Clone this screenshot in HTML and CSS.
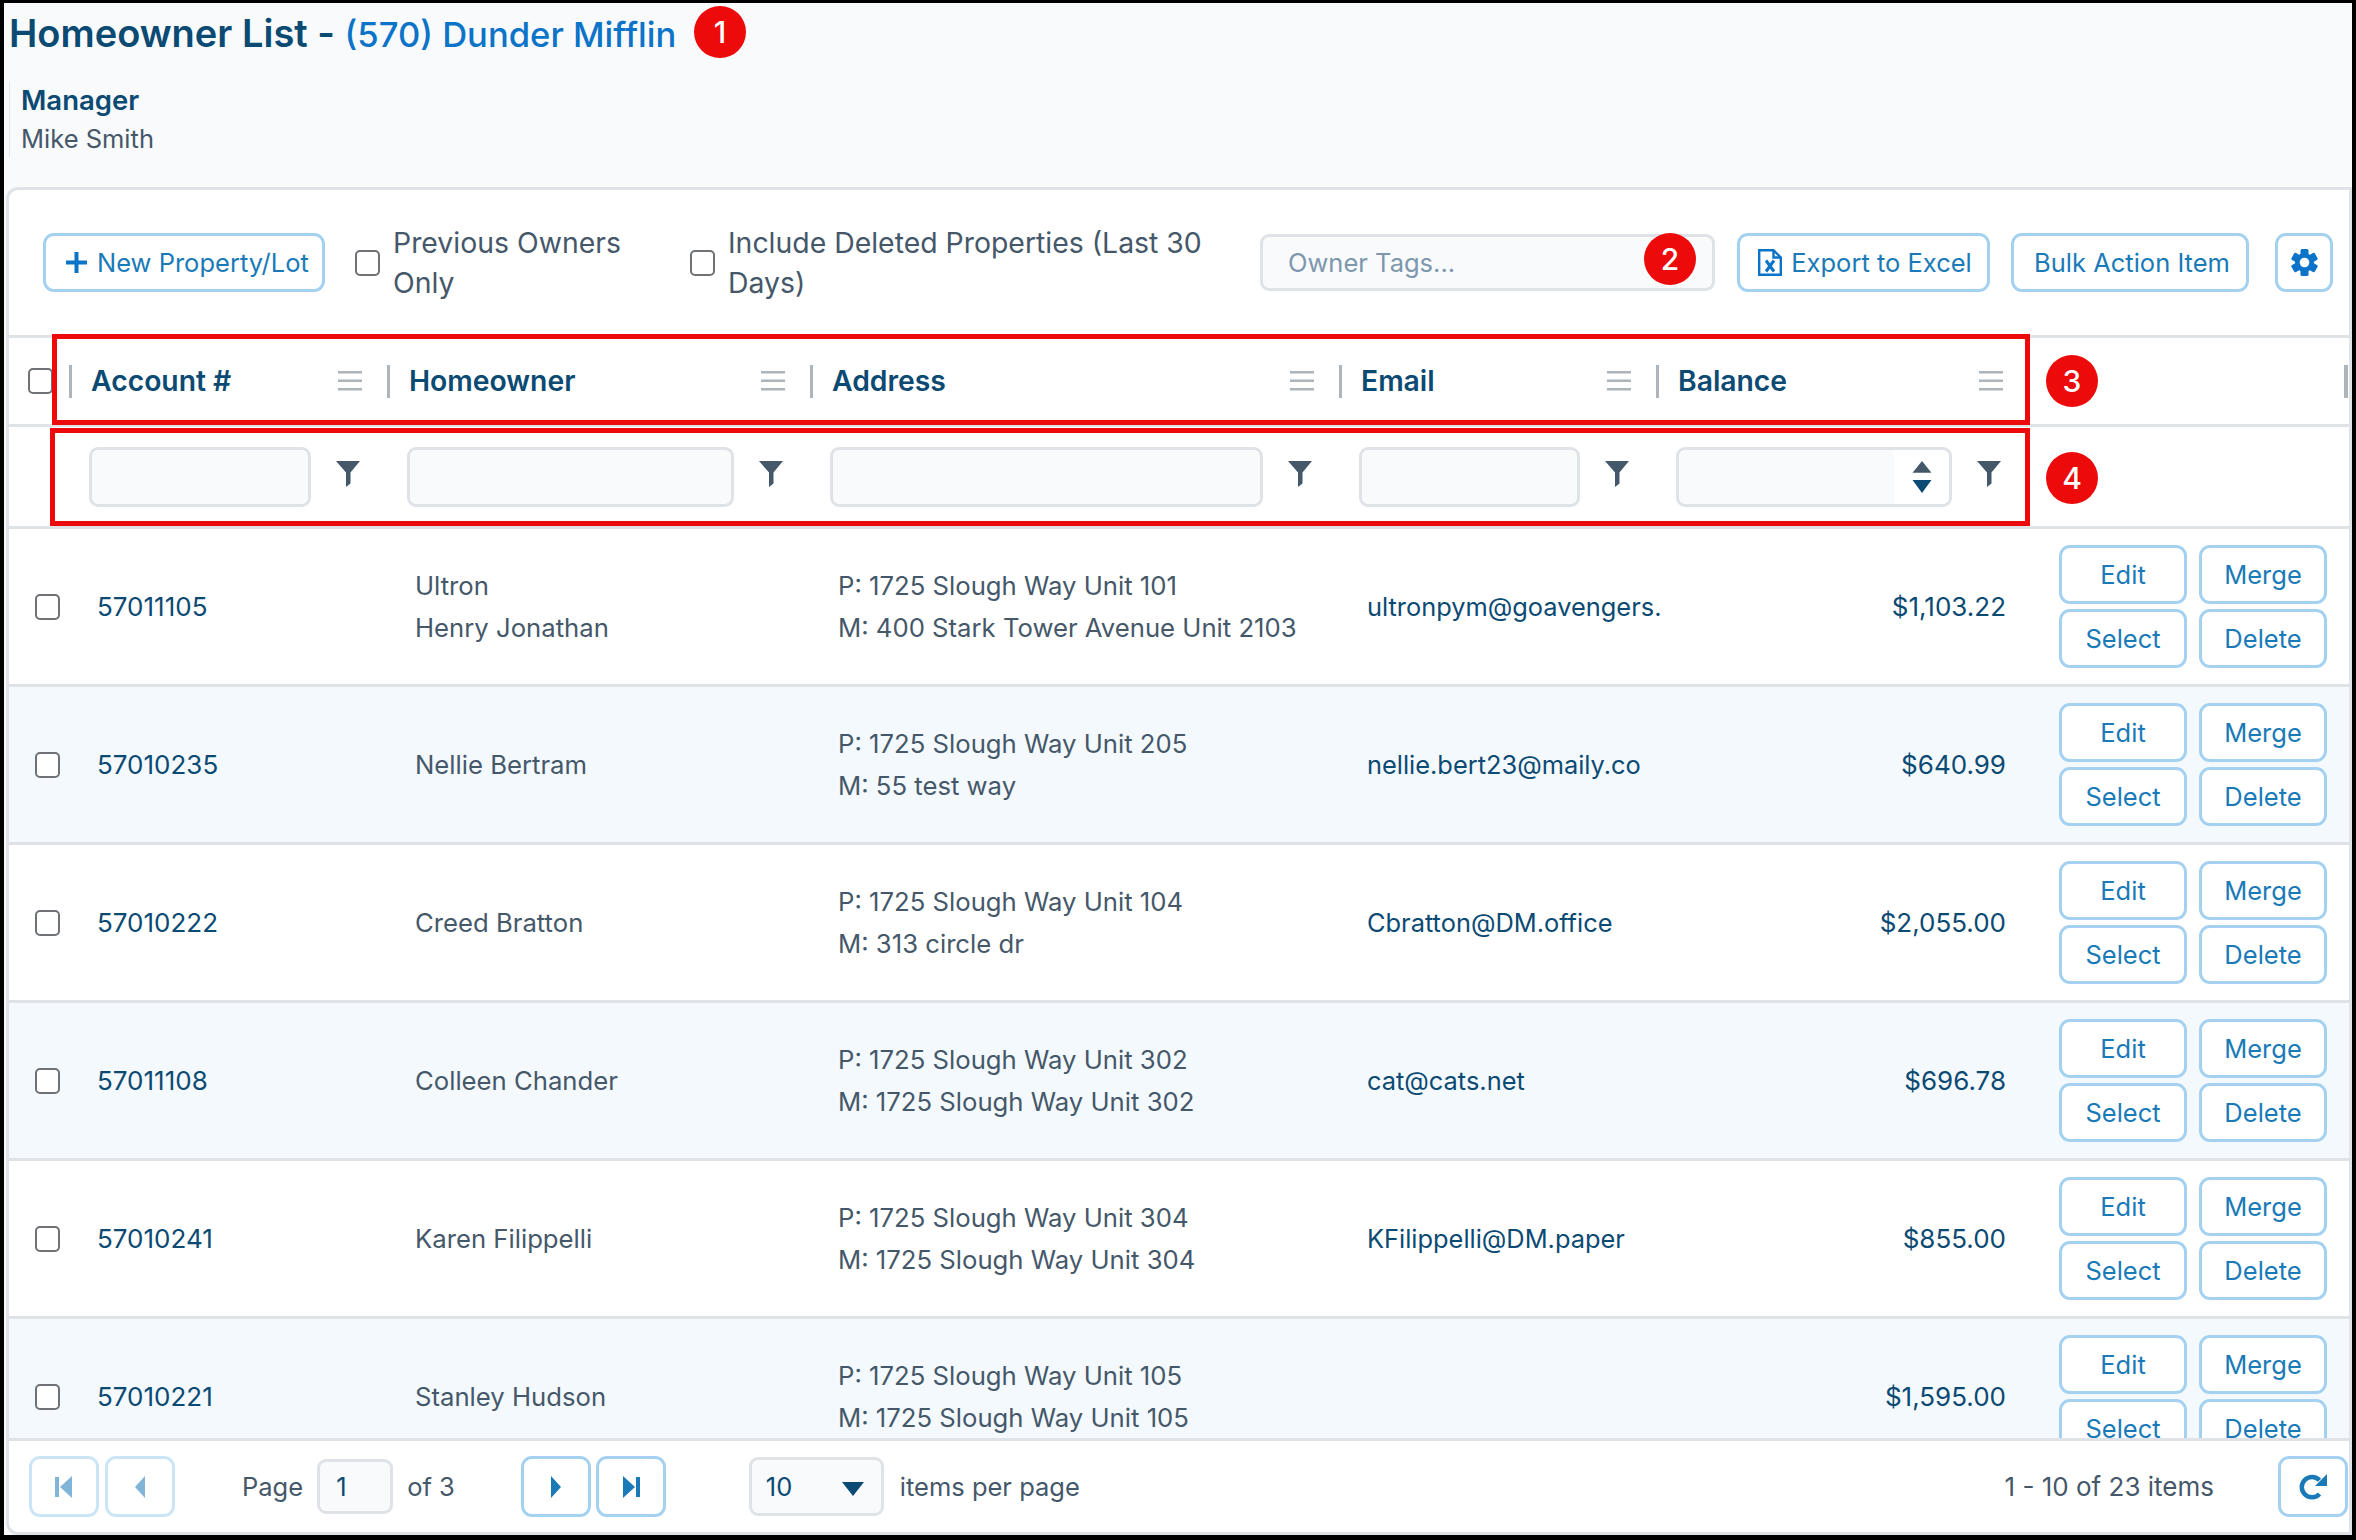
FILE: index.html
```html
<!DOCTYPE html>
<html lang="en">
<head>
  <meta charset="UTF-8">
  <title>Homeowner List</title>
  <link rel="stylesheet" href="styles.css">
</head>
<body>
  <svg class="defs" width="0" height="0">
    <symbol id="funnel" viewBox="0 0 24 26"><path d="M0 0H24L14.5 11.5V22.5L10 26V11.5Z"/></symbol>
    <symbol id="menu" viewBox="0 0 24 20"><path d="M0 0H24V2.5H0ZM0 8.5H24V11H0ZM0 17H24V19.5H0Z"/></symbol>
  </svg>

  <div class="frame">
    <h1 class="title">Homeowner List - <span class="title-link">(570) Dunder Mifflin</span></h1>
    <div class="manager">
      <div class="manager-label">Manager</div>
      <div class="manager-name">Mike Smith</div>
    </div>

    <div class="card">
      <!-- Toolbar -->
      <div class="toolbar">
        <button class="btn btn-new">
          <svg class="icon-plus" viewBox="0 0 21 21"><path d="M8.5 0H12.5V8.5H21V12.5H12.5V21H8.5V12.5H0V8.5H8.5Z"/></svg>
          New Property/Lot
        </button>
        <label class="check-label check-owners"><span class="checkbox"></span><span>Previous Owners Only</span></label>
        <label class="check-label check-deleted"><span class="checkbox"></span><span>Include Deleted Properties (Last 30 Days)</span></label>
        <div class="tags">Owner Tags...</div>
        <button class="btn btn-export">
          <svg class="icon-excel" viewBox="0 0 24 27"><path d="M1.2 1.2H15.5L22.8 8.5V25.8H1.2Z"/><path class="fold" d="M15.5 1.2V8.5H22.8"/><path class="cross" d="M8 11.5L16 22.5M16 11.5L8 22.5"/></svg>
          Export to Excel
        </button>
        <button class="btn btn-bulk">Bulk Action Item</button>
        <button class="btn btn-gear">
          <svg class="icon-gear" viewBox="0 0 27 27">
            <rect x="9.5" y="0" width="8" height="27" rx="1.5"/>
            <rect x="9.5" y="0" width="8" height="27" rx="1.5" transform="rotate(60 13.5 13.5)"/>
            <rect x="9.5" y="0" width="8" height="27" rx="1.5" transform="rotate(120 13.5 13.5)"/>
            <circle cx="13.5" cy="13.5" r="9.5"/>
            <circle class="gear-hole" cx="13.5" cy="13.5" r="4.8"/>
          </svg>
        </button>
      </div>

      <!-- Grid header -->
      <div class="grid-row head-row">
        <div class="head-check"><span class="checkbox"></span></div>
        <div class="head-cell"><span class="head-title">Account #</span><svg class="icon-menu"><use href="#menu"/></svg></div>
        <div class="head-cell"><span class="head-title">Homeowner</span><svg class="icon-menu"><use href="#menu"/></svg></div>
        <div class="head-cell"><span class="head-title">Address</span><svg class="icon-menu"><use href="#menu"/></svg></div>
        <div class="head-cell"><span class="head-title">Email</span><svg class="icon-menu"><use href="#menu"/></svg></div>
        <div class="head-cell"><span class="head-title">Balance</span><svg class="icon-menu"><use href="#menu"/></svg></div>
        <div class="head-end"><span class="resizer"></span></div>
      </div>

      <!-- Filters -->
      <div class="grid-row filter-row">
        <div></div>
        <div class="filter-cell"><div class="filter-input"></div><svg class="icon-funnel"><use href="#funnel"/></svg></div>
        <div class="filter-cell"><div class="filter-input"></div><svg class="icon-funnel"><use href="#funnel"/></svg></div>
        <div class="filter-cell"><div class="filter-input"></div><svg class="icon-funnel"><use href="#funnel"/></svg></div>
        <div class="filter-cell"><div class="filter-input"></div><svg class="icon-funnel"><use href="#funnel"/></svg></div>
        <div class="filter-cell">
          <div class="filter-input filter-number">
            <div class="spinner">
              <svg viewBox="0 0 16 27"><path class="up" d="M8 0L16 10H0Z"/><path class="down" d="M0 16H16L8 27Z"/></svg>
            </div>
          </div>
          <svg class="icon-funnel"><use href="#funnel"/></svg>
        </div>
        <div></div>
      </div>

      <!-- Rows -->
      <div class="rows">
        <div class="grid-row data-row">
          <div class="cell-check"><span class="checkbox"></span></div>
          <div class="cell cell-account">57011105</div>
          <div class="cell">Ultron<br>Henry Jonathan</div>
          <div class="cell">P: 1725 Slough Way Unit 101<br>M: 400 Stark Tower Avenue Unit 2103</div>
          <div class="cell cell-email">ultronpym@goavengers.</div>
          <div class="cell cell-balance">$1,103.22</div>
          <div class="cell-actions"><button class="btn">Edit</button><button class="btn">Merge</button><button class="btn">Select</button><button class="btn">Delete</button></div>
        </div>
        <div class="grid-row data-row alt">
          <div class="cell-check"><span class="checkbox"></span></div>
          <div class="cell cell-account">57010235</div>
          <div class="cell">Nellie Bertram</div>
          <div class="cell">P: 1725 Slough Way Unit 205<br>M: 55 test way</div>
          <div class="cell cell-email">nellie.bert23@maily.co</div>
          <div class="cell cell-balance">$640.99</div>
          <div class="cell-actions"><button class="btn">Edit</button><button class="btn">Merge</button><button class="btn">Select</button><button class="btn">Delete</button></div>
        </div>
        <div class="grid-row data-row">
          <div class="cell-check"><span class="checkbox"></span></div>
          <div class="cell cell-account">57010222</div>
          <div class="cell">Creed Bratton</div>
          <div class="cell">P: 1725 Slough Way Unit 104<br>M: 313 circle dr</div>
          <div class="cell cell-email">Cbratton@DM.office</div>
          <div class="cell cell-balance">$2,055.00</div>
          <div class="cell-actions"><button class="btn">Edit</button><button class="btn">Merge</button><button class="btn">Select</button><button class="btn">Delete</button></div>
        </div>
        <div class="grid-row data-row alt">
          <div class="cell-check"><span class="checkbox"></span></div>
          <div class="cell cell-account">57011108</div>
          <div class="cell">Colleen Chander</div>
          <div class="cell">P: 1725 Slough Way Unit 302<br>M: 1725 Slough Way Unit 302</div>
          <div class="cell cell-email">cat@cats.net</div>
          <div class="cell cell-balance">$696.78</div>
          <div class="cell-actions"><button class="btn">Edit</button><button class="btn">Merge</button><button class="btn">Select</button><button class="btn">Delete</button></div>
        </div>
        <div class="grid-row data-row">
          <div class="cell-check"><span class="checkbox"></span></div>
          <div class="cell cell-account">57010241</div>
          <div class="cell">Karen Filippelli</div>
          <div class="cell">P: 1725 Slough Way Unit 304<br>M: 1725 Slough Way Unit 304</div>
          <div class="cell cell-email">KFilippelli@DM.paper</div>
          <div class="cell cell-balance">$855.00</div>
          <div class="cell-actions"><button class="btn">Edit</button><button class="btn">Merge</button><button class="btn">Select</button><button class="btn">Delete</button></div>
        </div>
        <div class="grid-row data-row alt">
          <div class="cell-check"><span class="checkbox"></span></div>
          <div class="cell cell-account">57010221</div>
          <div class="cell">Stanley Hudson</div>
          <div class="cell">P: 1725 Slough Way Unit 105<br>M: 1725 Slough Way Unit 105</div>
          <div class="cell cell-email"></div>
          <div class="cell cell-balance">$1,595.00</div>
          <div class="cell-actions"><button class="btn">Edit</button><button class="btn">Merge</button><button class="btn">Select</button><button class="btn">Delete</button></div>
        </div>
      </div>

      <!-- Pager -->
      <div class="pager">
        <button class="btn btn-page disabled"><svg viewBox="0 0 24 24"><path d="M3 2H7V22H3ZM20 1V23L8 12Z"/></svg></button>
        <button class="btn btn-page disabled btn-prev"><svg viewBox="0 0 24 24"><path d="M17 1V23L7 12Z"/></svg></button>
        <span class="page-label">Page</span>
        <div class="page-input">1</div>
        <span class="page-of">of 3</span>
        <button class="btn btn-page btn-next"><svg viewBox="0 0 24 24"><path d="M7 1V23L17 12Z"/></svg></button>
        <button class="btn btn-page btn-last"><svg viewBox="0 0 24 24"><path d="M4 1V23L16 12ZM17 2H21V22H17Z"/></svg></button>
        <div class="page-size">10<svg viewBox="0 0 22 14"><path d="M0 0H22L11 14Z"/></svg></div>
        <span class="page-per">items per page</span>
        <span class="page-count">1 - 10 of 23 items</span>
        <button class="btn btn-refresh">
          <svg viewBox="0 0 28 28"><path class="arc" d="M20.5 7.2A10.2 10.2 0 1 0 20.5 21"/><path d="M28 1V13H16Z"/></svg>
        </button>
      </div>
    </div>
  </div>

  <!-- Annotations laid over the screenshot -->
  <div class="mark mark-3"></div>
  <div class="mark mark-4"></div>
  <div class="badge badge-1">1</div>
  <div class="badge badge-2">2</div>
  <div class="badge badge-3">3</div>
  <div class="badge badge-4">4</div>
</body>
</html>
```

FILE: styles.css
```css
* {
  box-sizing: border-box;
}

html, body {
  margin: 0;
  height: 100%;
}

body {
  font-family: Inter, "Liberation Sans", sans-serif;
  font-size: 25.5px;
  color: #45586a;
  overflow: hidden;
  position: relative;
}

.defs {
  position: absolute;
}

.frame {
  height: 1540px;
  border-style: solid;
  border-color: #000;
  border-width: 3px 4px 5px 4px;
  background: #f9fafc;
  display: flex;
  flex-direction: column;
}

.title {
  margin: 0;
  padding-left: 5px;
  height: 58px;
  font-size: 38px;
  line-height: 60px;
  font-weight: 600;
  color: #0b4a73;
}

.title-link {
  font-size: 34.6px;
  font-weight: 500;
  color: #0b74c9;
}

.manager {
  margin: 20px 0 0 5px;
  padding-left: 11px;
  height: 76px;
  border-left: 1px solid #e4e7ea;
}

.manager-label {
  font-size: 27.5px;
  font-weight: 600;
  color: #0b4a73;
  line-height: 38px;
}

.manager-name {
  line-height: 39px;
}

.card {
  margin: 30px 0 0 2px;
  flex: 1;
  min-height: 0;
  display: flex;
  flex-direction: column;
  background: #fff;
  border: 3px solid #dfe3e7;
  border-radius: 12px 0 0 12px;
}

/* buttons */

.btn {
  font-family: inherit;
  font-size: 25.5px;
  color: #1a7ab8;
  background: #fff;
  border: 3px solid #a3d1ef;
  border-radius: 11px;
  height: 59px;
  padding: 0;
  display: flex;
  align-items: center;
  justify-content: center;
}

.checkbox {
  display: block;
  flex: none;
  width: 25px;
  height: 26px;
  background: #fff;
  border: 2.5px solid #6e7276;
  border-radius: 5px;
}

/* toolbar */

.toolbar {
  height: 145px;
  flex: none;
  display: flex;
  align-items: center;
  padding-left: 34px;
}

.btn-new {
  width: 282px;
  gap: 10px;
  justify-content: flex-start;
  padding-left: 20px;
  margin-right: 30px;
}

.icon-plus {
  width: 21px;
  height: 21px;
  fill: #0b74c9;
}

.check-label {
  display: flex;
  align-items: center;
  gap: 13px;
  font-size: 28.4px;
  line-height: 40px;
}

.check-owners {
  width: 305px;
  margin-right: 30px;
}

.check-deleted {
  width: 540px;
  margin-right: 30px;
}

.tags {
  width: 455px;
  height: 57px;
  padding-left: 25px;
  line-height: 51px;
  color: #7d97ad;
  background: #f9fafc;
  border: 3px solid #dfe3e7;
  border-radius: 9px;
}

.btn-export {
  width: 253px;
  gap: 9px;
  padding-left: 3px;
  margin-left: 22px;
}

.icon-excel {
  width: 24px;
  height: 27px;
  fill: none;
  stroke: #0b74c9;
  stroke-width: 2.4;
}

.icon-excel .cross {
  stroke-width: 3;
}

.btn-bulk {
  width: 238px;
  padding-left: 4px;
  margin-left: 21px;
}

.btn-gear {
  width: 58px;
  margin-left: 26px;
}

.icon-gear {
  width: 27px;
  height: 27px;
  fill: #0b74c9;
}

.gear-hole {
  fill: #fff;
}

/* grid */

.grid-row {
  display: grid;
  grid-template-columns: 60px 318px 423px 529px 317px 372px 1fr;
  flex: none;
}

.head-row {
  height: 92px;
  border-top: 3px solid #dfe3e7;
  border-bottom: 3px solid #dfe3e7;
  align-items: center;
}

.head-check {
  padding-left: 19px;
}

.head-cell {
  display: flex;
  align-items: center;
  justify-content: space-between;
  height: 33px;
  padding: 0 25px 0 19px;
  border-left: 3px solid #adb4ba;
}

.head-title {
  font-size: 28.3px;
  font-weight: 600;
  color: #0b4a73;
}

.icon-menu {
  width: 24px;
  height: 20px;
  fill: #adb4ba;
}

.head-end {
  display: flex;
  justify-content: flex-end;
}

.resizer {
  width: 4px;
  height: 33px;
  margin-right: 1px;
  background: #adb4ba;
}

.filter-row {
  height: 102px;
  border-bottom: 3px solid #dfe3e7;
  align-items: center;
}

.filter-cell {
  display: flex;
  align-items: center;
  gap: 25px;
  padding: 0 27px 0 20px;
}

.filter-input {
  flex: 1;
  height: 60px;
  background: #f9fafc;
  border: 3px solid #dfe3e7;
  border-radius: 9px;
}

.filter-number {
  display: flex;
  justify-content: flex-end;
}

.spinner {
  width: 55px;
  display: flex;
  align-items: center;
  justify-content: center;
  background: #fff;
  border-radius: 0 7px 7px 0;
}

.spinner svg {
  width: 22px;
  height: 32px;
}

.spinner .up {
  fill: #45586a;
}

.spinner .down {
  fill: #0b4a73;
}

.icon-funnel {
  flex: none;
  width: 24px;
  height: 26px;
  margin-top: -5px;
  fill: #45586a;
}

.rows {
  flex: 1;
  min-height: 0;
  overflow: hidden;
  border-bottom: 3px solid #dfe3e7;
}

.data-row {
  height: 158px;
  align-items: center;
  background: #fff;
  border-bottom: 3px solid #dfe3e7;
}

.data-row.alt {
  background: #f4f9fd;
}

.cell-check {
  padding-left: 26px;
}

.cell {
  padding-left: 28px;
  font-size: 25.7px;
  line-height: 42px;
}

.cell-account, .cell-balance {
  font-size: 26px;
  color: #0b4a73;
}

.cell-email {
  font-size: 25.4px;
  color: #0b4a73;
}

.cell-balance {
  text-align: right;
  padding-right: 22px;
}

.cell-actions {
  display: grid;
  grid-template-columns: 128px 128px;
  gap: 5px 12px;
  padding-left: 31px;
}

/* pager */

.pager {
  flex: none;
  height: 91px;
  display: flex;
  align-items: center;
  padding-left: 20px;
}

.btn-page {
  width: 70px;
  height: 61px;
}

.btn-page svg {
  width: 24px;
  height: 24px;
  fill: #1a7ab8;
}

.btn-page.disabled {
  opacity: 0.55;
}

.btn-prev {
  margin-left: 6px;
}

.page-label {
  margin-left: 67px;
}

.page-input {
  width: 76px;
  height: 55px;
  margin-left: 14px;
  padding-left: 16px;
  line-height: 50px;
  color: #0b4a73;
  background: #f9fafc;
  border: 3px solid #dfe3e7;
  border-radius: 9px;
}

.page-of {
  margin-left: 14px;
}

.btn-next {
  margin-left: 66px;
}

.btn-last {
  margin-left: 5px;
}

.page-size {
  width: 135px;
  height: 59px;
  margin-left: 83px;
  padding: 0 17px 0 14px;
  display: flex;
  align-items: center;
  justify-content: space-between;
  color: #0b4a73;
  background: #f9fafc;
  border: 3px solid #dfe3e7;
  border-radius: 9px;
}

.page-size svg {
  width: 22px;
  height: 14px;
  margin-top: 4px;
  fill: #0b4a73;
}

.page-per {
  margin-left: 16px;
}

.page-count {
  margin-left: auto;
  font-size: 26px;
}

.btn-refresh {
  width: 70px;
  height: 61px;
  margin-left: 64px;
  margin-right: 1px;
}

.btn-refresh svg {
  width: 28px;
  height: 28px;
  fill: #1a7ab8;
}

.btn-refresh .arc {
  fill: none;
  stroke: #1a7ab8;
  stroke-width: 4.5;
}

/* annotations */

.mark {
  position: absolute;
  border: 5px solid #ec0a0a;
}

.mark-3 {
  left: 52px;
  top: 334px;
  width: 1978px;
  height: 91px;
}

.mark-4 {
  left: 50px;
  top: 428px;
  width: 1980px;
  height: 98px;
}

.badge {
  position: absolute;
  width: 52px;
  height: 52px;
  line-height: 52px;
  border-radius: 50%;
  text-align: center;
  font-size: 30px;
  font-weight: 500;
  color: #fff;
  background: #ec0a0a;
}

.badge-1 {
  left: 694px;
  top: 6px;
}

.badge-2 {
  left: 1644px;
  top: 233px;
}

.badge-3 {
  left: 2046px;
  top: 355px;
}

.badge-4 {
  left: 2046px;
  top: 452px;
}
```
